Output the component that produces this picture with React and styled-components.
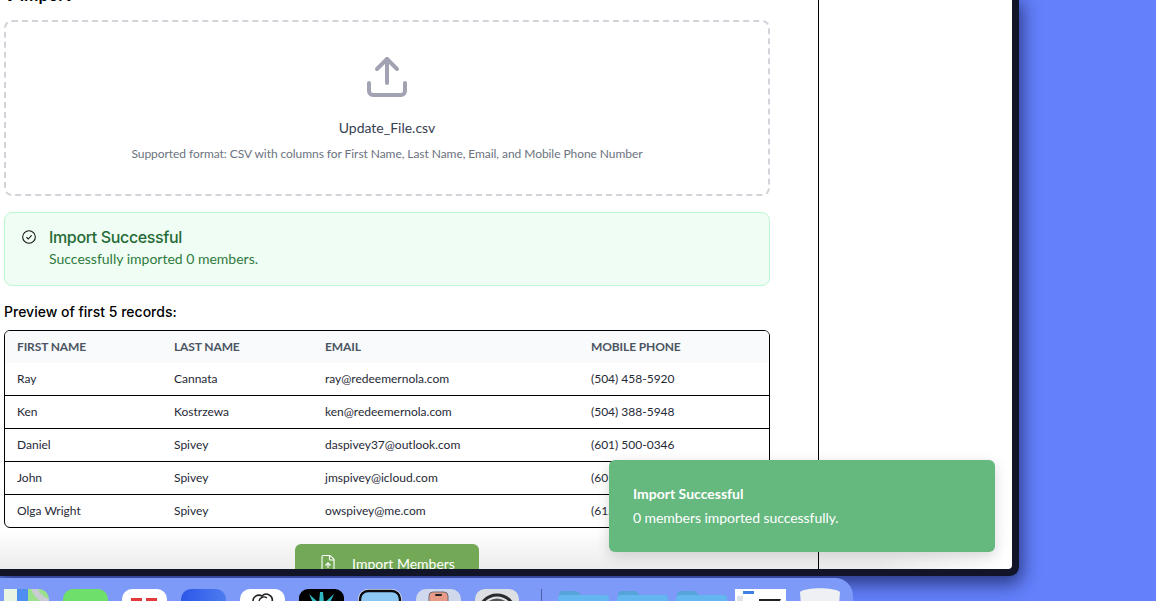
import React from 'react';
import styled, { createGlobalStyle } from 'styled-components';
import { FileUp, Upload } from 'lucide-react';

const GlobalStyle = createGlobalStyle`
  html, body {
    margin: 0;
    padding: 0;
    background: #6480fb;
    font-family: "Lato", "Liberation Sans", sans-serif;
  }
  * { box-sizing: border-box; }
`;

const Desktop = styled.div`
  width: 1156px;
  height: 601px;
  overflow: hidden;
  display: flex;
  flex-direction: column;
  background: #6480fb;
`;

const Frame = styled.div`
  width: 1019px;
  height: 576px;
  flex: none;
  border-right: 7px solid #111527;
  border-bottom: 7px solid #111527;
  border-bottom-right-radius: 9px;
  background: #111527;
  box-shadow: 0 5px 18px 3px rgba(15, 25, 80, 0.7);
`;

const Window = styled.div`
  position: relative;
  height: 100%;
  display: flex;
  overflow: hidden;
  border-bottom-right-radius: 4px;
  background:
    linear-gradient(to right, rgba(255, 255, 255, 0) 880px, #fff 1005px),
    linear-gradient(to bottom, #fff 0, #fff 530px, #ebebeb 569px);
`;

const Main = styled.main`
  width: 819px;
  flex: none;
  padding-left: 4px;
  border-right: 1px solid #000;
`;

const Content = styled.div`
  width: 766px;
`;

const Title = styled.h2`
  margin: -17px 0 13px;
  height: 24px;
  line-height: 24px;
  font-family: "Inter", sans-serif;
  font-size: 16px;
  font-weight: 600;
  color: #000;
`;

const DropZone = styled.div`
  height: 176px;
  padding-top: 31px;
  display: flex;
  flex-direction: column;
  align-items: center;
  border: 2px dashed #d1d5db;
  border-radius: 8px;

  & > svg {
    flex: none;
    color: #a1a3b3;
  }
`;

const FileName = styled.div`
  margin-top: 17px;
  height: 20px;
  line-height: 20px;
  font-size: 14px;
  color: #374151;
`;

const FileHint = styled.div`
  margin-top: 8px;
  height: 16px;
  line-height: 16px;
  font-size: 12px;
  letter-spacing: -0.06px;
  color: #6b7280;
`;

const Alert = styled.div`
  margin-top: 16px;
  height: 74px;
  padding: 14px 16px 0 16px;
  display: flex;
  gap: 12px;
  background: #f0fdf4;
  border: 1px solid #bbf7d0;
  border-radius: 8px;
`;

const AlertIcon = styled.svg`
  width: 16px;
  height: 16px;
  flex: none;
  margin-top: 2px;
  fill: none;
  stroke: #111;
  stroke-width: 1.6;
  stroke-linecap: round;
  stroke-linejoin: round;
`;

const AlertTitle = styled.div`
  height: 20px;
  line-height: 20px;
  font-family: "Inter", sans-serif;
  font-size: 16px;
  font-weight: 500;
  letter-spacing: -0.36px;
  color: #256b36;
`;

const AlertText = styled.div`
  margin-top: 2px;
  height: 20px;
  line-height: 20px;
  font-size: 14px;
  color: #2f7a3e;
`;

const PreviewLabel = styled.div`
  margin-top: 16px;
  height: 20px;
  line-height: 20px;
  font-family: "Inter", sans-serif;
  font-size: 14px;
  font-weight: 500;
  color: #000;
`;

const TableBox = styled.div`
  margin-top: 8px;
  border: 1px solid #000;
  border-radius: 6px;
  overflow: hidden;
`;

const Table = styled.table`
  width: 100%;
  table-layout: fixed;
  border-collapse: separate;
  border-spacing: 0;
`;

const Th = styled.th`
  height: 32px;
  padding: 0 12px 1px;
  width: ${p => p.$width};
  text-align: left;
  font-size: 12px;
  font-weight: 700;
  letter-spacing: -0.01em;
  text-transform: uppercase;
  color: #4b5563;
  background: #f9fafb;
`;

const Td = styled.td`
  height: 33px;
  padding: 0 12px 2px;
  font-size: 12px;
  color: #1f2937;
  border-bottom: 1px solid #000;

  tr:last-child > & {
    height: 32px;
    border-bottom: 0;
  }
`;

const Actions = styled.div`
  margin-top: 16px;
  display: flex;
  justify-content: center;
`;

const ImportButton = styled.button`
  width: 184px;
  height: 38px;
  padding: 0;
  display: flex;
  align-items: center;
  justify-content: center;
  gap: 15px;
  border: 0;
  border-radius: 6px;
  background: #72a856;
  color: #fff;
  font-family: inherit;
  font-size: 14px;
  font-weight: 400;
`;

const Toast = styled.div`
  position: absolute;
  right: 17px;
  bottom: 17px;
  width: 386px;
  height: 92px;
  padding: 24px;
  border-radius: 6px;
  background: #65b97f;
  color: #fff;
  box-shadow: 0 4px 14px rgba(0, 0, 0, 0.16);
`;

const ToastTitle = styled.div`
  height: 20px;
  line-height: 20px;
  font-size: 14px;
  font-weight: 700;
`;

const ToastText = styled.div`
  margin-top: 4px;
  height: 20px;
  line-height: 20px;
  font-size: 14px;
  letter-spacing: -0.06px;
`;

const Dock = styled.div`
  position: relative;
  width: 853px;
  height: 23px;
  margin-top: 2px;
  padding: 11px 0 0 4px;
  flex: none;
  display: flex;
  align-items: flex-start;
  gap: 14px;
  overflow: hidden;
  background: #7e9af8;
  border-top-right-radius: 18px;
`;

const FolderGroup = styled.div`
  display: flex;
  flex: none;
  gap: 8px;
  margin-left: 2px;
`;

const Tile = styled.svg`
  width: ${p => p.$w || 45}px;
  height: 45px;
  flex: none;
  margin-top: ${p => p.$mt || 0}px;
`;

const DockDivider = styled.div`
  width: 1px;
  height: 20px;
  flex: none;
  margin: 0 0 0 8px;
  background: #4d5fa8;
`;

const rows = [
  ['Ray', 'Cannata', 'ray@redeemernola.com', '(504) 458-5920'],
  ['Ken', 'Kostrzewa', 'ken@redeemernola.com', '(504) 388-5948'],
  ['Daniel', 'Spivey', 'daspivey37@outlook.com', '(601) 500-0346'],
  ['John', 'Spivey', 'jmspivey@icloud.com', '(601) 500-0347'],
  ['Olga Wright', 'Spivey', 'owspivey@me.com', '(615) 500-0348'],
];

const Folder = () => (
  <Tile $w={51} viewBox="0 0 51 45">
    <path d="M1 6 a4 4 0 0 1 4-4 h12 a5 5 0 0 1 4 2 l2 2 h24 a4 4 0 0 1 4 4 v4 H1z" fill="#55a5d9" />
    <rect x="0" y="6" width="51" height="39" rx="4" fill="#63b6f0" />
  </Tile>
);

function DockIcons() {
  return (
    <>
      <Tile viewBox="0 0 45 45">
        <rect width="45" height="45" rx="10" fill="#9be08a" />
        <path d="M0 0 h14 v14 L0 22z" fill="#e9f5e3" />
        <rect x="13" y="0" width="11" height="45" fill="#4f8df0" />
        <path d="M27 0 C31 10 38 14 45 17 v-7 C40 8 36 5 34 0z" fill="#c9ccd4" />
      </Tile>
      <Tile viewBox="0 0 45 45"><rect width="45" height="45" rx="10" fill="#6fdf6b" /></Tile>
      <Tile viewBox="0 0 45 45">
        <rect width="45" height="45" rx="10" fill="#fff" />
        <rect x="9" y="9" width="11" height="4" fill="#e5383b" />
        <rect x="24" y="9" width="11" height="4" fill="#e5383b" />
      </Tile>
      <Tile viewBox="0 0 45 45">
        <defs>
          <linearGradient id="mailBlue" x1="0" x2="1" y1="0" y2="0">
            <stop offset="0" stopColor="#2c57e8" />
            <stop offset="1" stopColor="#4d7bef" />
          </linearGradient>
        </defs>
        <rect width="45" height="45" rx="10" fill="url(#mailBlue)" />
      </Tile>
      <Tile viewBox="0 0 45 45">
        <rect width="45" height="45" rx="10" fill="#fff" />
        <path d="M13 13 a6 6 0 0 1 9-6 a6 6 0 0 1 10 6" fill="none" stroke="#222" strokeWidth="1.6" />
        <path d="M19 12 a5 5 0 0 1 8-3" fill="none" stroke="#222" strokeWidth="1.4" />
      </Tile>
      <Tile viewBox="0 0 45 45">
        <rect width="45" height="45" rx="9" fill="#000" />
        <path d="M10 5 L20 14 L21 3 L24 3 L25 14 L35 5 L29 18 H16z" fill="#2fb7c4" />
      </Tile>
      <Tile $w={44} viewBox="0 0 44 45">
        <rect width="44" height="45" rx="10" fill="#dfe4ee" />
        <rect x="2" y="2" width="40" height="41" rx="8" fill="#8cc7f3" stroke="#0b0b0f" strokeWidth="2.4" />
      </Tile>
      <Tile viewBox="0 0 45 45">
        <rect width="45" height="45" rx="10" fill="#d0d8ee" />
        <rect x="13" y="3" width="19" height="42" rx="4" fill="#e79a86" stroke="#6c6a70" strokeWidth="1" />
        <rect x="19" y="5" width="7" height="2" rx="1" fill="#222" />
      </Tile>
      <Tile $w={44} viewBox="0 0 44 45">
        <rect width="44" height="45" rx="10" fill="#dcdfe4" />
        <circle cx="22" cy="24" r="18" fill="none" stroke="#2a2a2c" strokeWidth="3" />
        <circle cx="22" cy="24" r="13" fill="none" stroke="#555" strokeWidth="3" />
      </Tile>
      <DockDivider />
      <FolderGroup>
        <Folder />
        <Folder />
        <Folder />
        <Tile $w={51} viewBox="0 0 51 45">
          <rect width="51" height="45" fill="#fff" />
          <rect x="8" y="2" width="11" height="3" fill="#3f7fe8" />
          <rect x="2" y="7" width="6" height="5" fill="#dde1e8" />
          <path d="M24 10 H46 L44 14 H24z" fill="#222" />
        </Tile>
      </FolderGroup>
      <Tile $w={40} $mt={-1} viewBox="0 0 40 45">
        <path d="M0 4 C6 -1 34 -1 40 4 L37 45 H3z" fill="#eef0f4" />
      </Tile>
    </>
  );
}

export default function App() {
  return (
    <>
      <GlobalStyle />
      <Desktop>
        <Frame>
          <Window>
            <Main>
              <Content>
                <Title>V Import</Title>
                <DropZone>
                  <Upload size={48} strokeWidth={2} />
                  <FileName>Update_File.csv</FileName>
                  <FileHint>Supported format: CSV with columns for First Name, Last Name, Email, and Mobile Phone Number</FileHint>
                </DropZone>
                <Alert>
                  <AlertIcon viewBox="0 0 24 24">
                    <circle cx="12" cy="12" r="9.5" />
                    <path d="M8.5 12.5l2.5 2.5 4.5-5" />
                  </AlertIcon>
                  <div>
                    <AlertTitle>Import Successful</AlertTitle>
                    <AlertText>Successfully imported 0 members.</AlertText>
                  </div>
                </Alert>
                <PreviewLabel>Preview of first 5 records:</PreviewLabel>
                <TableBox>
                  <Table>
                    <thead>
                      <tr>
                        <Th $width="157px">First Name</Th>
                        <Th $width="151px">Last Name</Th>
                        <Th $width="266px">Email</Th>
                        <Th>Mobile Phone</Th>
                      </tr>
                    </thead>
                    <tbody>
                      {rows.map(r => (
                        <tr key={r[2]}>
                          {r.map(cell => <Td key={cell}>{cell}</Td>)}
                        </tr>
                      ))}
                    </tbody>
                  </Table>
                </TableBox>
                <Actions>
                  <ImportButton>
                    <FileUp size={18} strokeWidth={1.5} />
                    Import Members
                  </ImportButton>
                </Actions>
              </Content>
            </Main>
            <Toast>
              <ToastTitle>Import Successful</ToastTitle>
              <ToastText>0 members imported successfully.</ToastText>
            </Toast>
          </Window>
        </Frame>
        <Dock>
          <DockIcons />
        </Dock>
      </Desktop>
    </>
  );
}
